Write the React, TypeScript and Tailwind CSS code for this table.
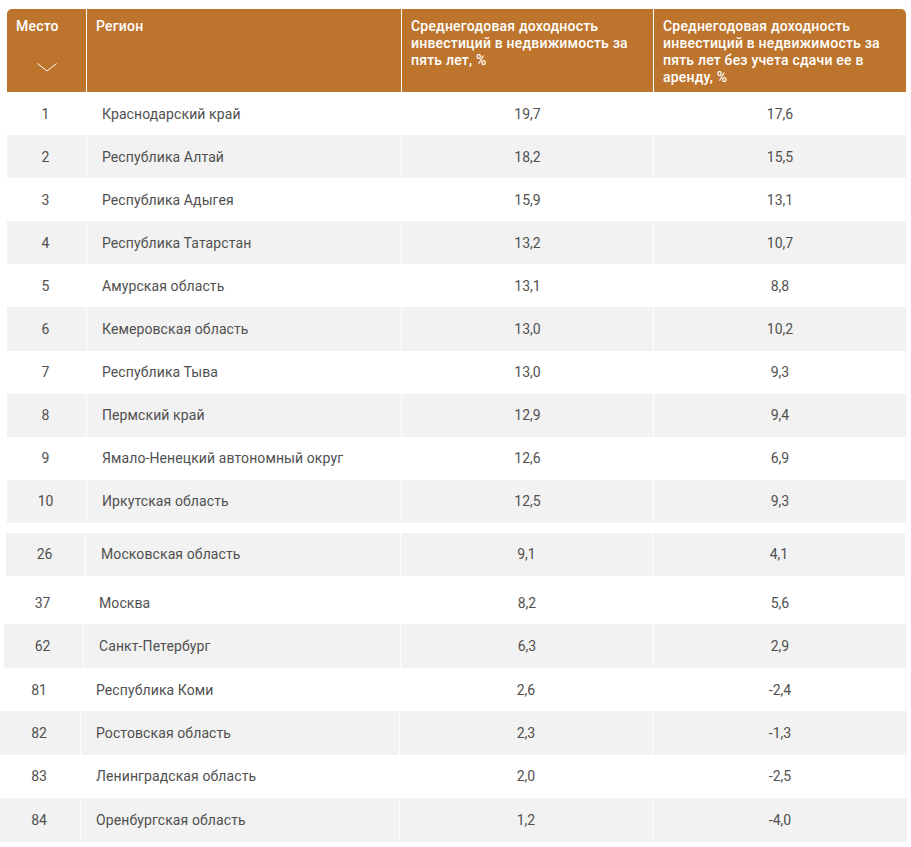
import React from "react";

type Row = [string, string, string, string];

const tableA: Row[] = [
  ["1", "Краснодарский край", "19,7", "17,6"],
  ["2", "Республика Алтай", "18,2", "15,5"],
  ["3", "Республика Адыгея", "15,9", "13,1"],
  ["4", "Республика Татарстан", "13,2", "10,7"],
  ["5", "Амурская область", "13,1", "8,8"],
  ["6", "Кемеровская область", "13,0", "10,2"],
  ["7", "Республика Тыва", "13,0", "9,3"],
  ["8", "Пермский край", "12,9", "9,4"],
  ["9", "Ямало-Ненецкий автономный округ", "12,6", "6,9"],
  ["10", "Иркутская область", "12,5", "9,3"],
];

const tableB: Row[] = [["26", "Московская область", "9,1", "4,1"]];
const tableC: Row[] = [
  ["37", "Москва", "8,2", "5,6"],
  ["62", "Санкт-Петербург", "6,3", "2,9"],
];
const tableD: Row[] = [
  ["81", "Республика Коми", "2,6", "-2,4"],
  ["82", "Ростовская область", "2,3", "-1,3"],
  ["83", "Ленинградская область", "2,0", "-2,5"],
  ["84", "Оренбургская область", "1,2", "-4,0"],
];

function Rows({
  rows,
  cols,
  h,
  startGray,
}: {
  rows: Row[];
  cols: string;
  h: string;
  startGray: boolean;
}) {
  return (
    <>
      {rows.map((r, i) => {
        const gray = startGray ? i % 2 === 0 : i % 2 === 1;
        const bg = gray ? "bg-[#f2f2f2]" : "bg-white";
        return (
          <div key={r[0]} className={`grid gap-x-px ${cols} ${h}`}>
            <div className={`${bg} flex items-center justify-center pr-[2px] pt-px`}>{r[0]}</div>
            <div className={`${bg} flex items-center pl-[15px] pt-px tracking-[0.1px]`}>{r[1]}</div>
            <div className={`${bg} flex items-center justify-center pt-px`}>{r[2]}</div>
            <div className={`${bg} flex items-center justify-center pt-px`}>{r[3]}</div>
          </div>
        );
      })}
    </>
  );
}

export default function App() {
  return (
    <div
      className="bg-white w-[911px] h-[847px] pt-[9px] text-[14px] text-[#505050]"
      style={{ fontFamily: "Roboto, 'Noto Sans', sans-serif" }}
    >
      {/* Table A */}
      <div className="ml-[7px] w-[899px]">
        <div className="grid gap-x-px grid-cols-[79px_314px_251px_252px] h-[83px] rounded-t-[5px] overflow-hidden text-white font-medium leading-[17px] tracking-[0.2px]">
          <div className="bg-[#bd742c] pl-[9px] pt-[9px] flex flex-col">
            <span>Место</span>
            <svg className="ml-[21px] mt-[28px]" width="20" height="9" viewBox="0 0 20 9">
              <polyline points="0.5,0.5 10,8 19.5,0.5" fill="none" stroke="white" strokeWidth="1" />
            </svg>
          </div>
          <div className="bg-[#bd742c] pl-[9px] pt-[9px]">Регион</div>
          <div className="bg-[#bd742c] pl-[9px] pr-[8px] pt-[9px]">
            Среднегодовая доходность инвестиций в недвижимость за пять лет, %
          </div>
          <div className="bg-[#bd742c] pl-[9px] pr-[8px] pt-[9px]">
            Среднегодовая доходность инвестиций в недвижимость за пять лет без учета сдачи ее в аренду, %
          </div>
        </div>
        <Rows rows={tableA} cols="grid-cols-[79px_314px_251px_252px]" h="h-[43.1px]" startGray={false} />
      </div>

      {/* Table B */}
      <div className="ml-[6px] w-[899px] mt-[10px]">
        <Rows rows={tableB} cols="grid-cols-[79px_314px_251px_252px]" h="h-[43px]" startGray={true} />
      </div>

      {/* Table C */}
      <div className="ml-[4px] w-[902px] mt-[5px]">
        <Rows rows={tableC} cols="grid-cols-[79px_316px_252px_252px]" h="h-[43.5px]" startGray={false} />
      </div>

      {/* Table D */}
      <div className="w-[907px]">
        <Rows rows={tableD} cols="grid-cols-[80px_318px_252px_254px]" h="h-[43.4px]" startGray={false} />
      </div>
    </div>
  );
}
